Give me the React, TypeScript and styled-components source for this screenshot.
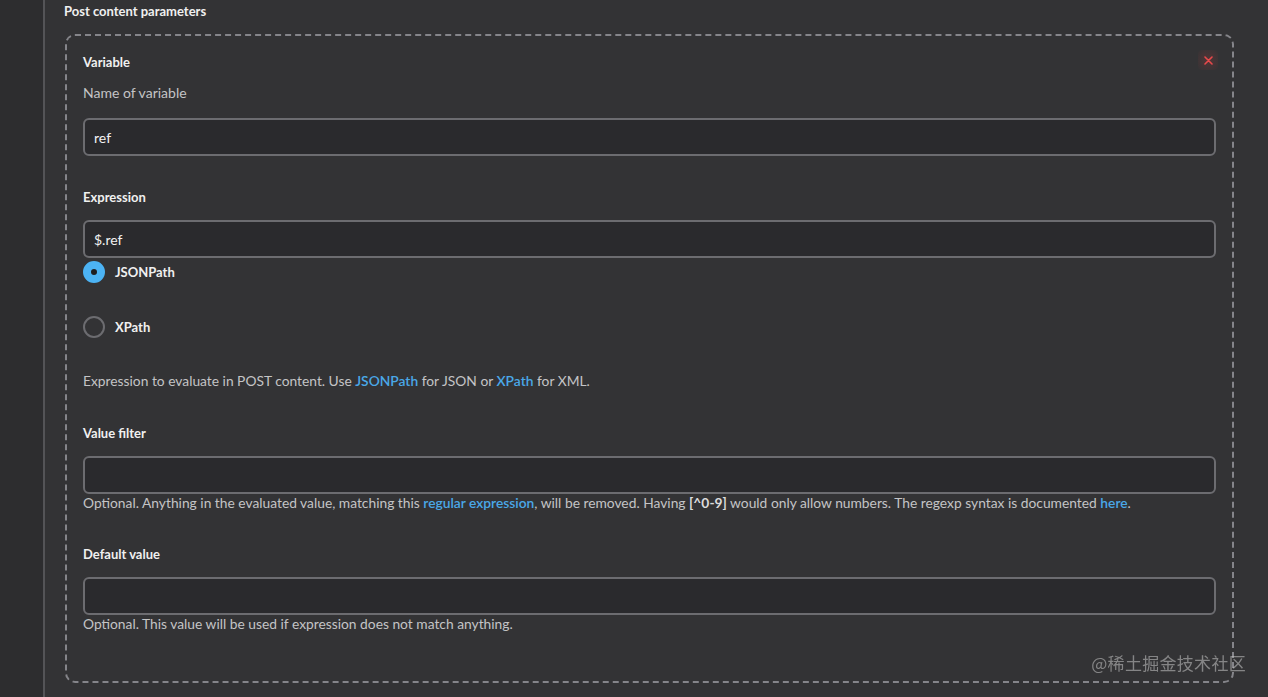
import React from 'react';
import styled, { createGlobalStyle } from 'styled-components';

const GlobalStyle = createGlobalStyle`
  html, body {
    margin: 0;
    padding: 0;
    background: #333335;
    font-family: Lato, "Noto Sans", "Liberation Sans", "Noto Sans CJK SC", sans-serif;
    color: #e8e8e8;
  }
`;

const Page = styled.div`
  display: flex;
  min-height: 697px;
  background: #333335;
`;

const Rail = styled.div`
  width: 43px;
  flex: none;
  background: #2d2d2f;
  border-right: 2px solid #545457;
`;

const Main = styled.main`
  flex: 1;
  padding: 2px 34px 15px 19px;
`;

const Title = styled.h2`
  margin: 0;
  font-size: 13px;
  font-weight: 700;
  line-height: 18px;
  color: #f0f0f0;
`;

const Card = styled.div`
  position: relative;
  margin: 14px 0 0 1px;
  border: 2px dashed #85858a;
  border-radius: 10px;
  padding: 16px 16px 48px 16px;
`;

const CloseButton = styled.button`
  position: absolute;
  top: 14px;
  right: 14px;
  width: 20px;
  height: 20px;
  padding: 0;
  border: none;
  border-radius: 4px;
  background: radial-gradient(circle, rgba(220, 60, 60, 0.18) 0%, rgba(220, 60, 60, 0.06) 70%, transparent 100%);
  display: flex;
  align-items: center;
  justify-content: center;
  cursor: pointer;
`;

const Label = styled.div<{ $top?: number }>`
  margin-top: ${(p) => p.$top ?? 0}px;
  font-size: 13px;
  font-weight: 700;
  line-height: 20px;
  color: #f0f0f0;
`;

const Description = styled.div<{ $top?: number }>`
  margin-top: ${(p) => p.$top ?? 0}px;
  font-size: 14px;
  line-height: 20px;
  color: #c4c4c6;
`;

const Help = styled.div<{ $top?: number }>`
  margin-top: ${(p) => p.$top ?? 0}px;
  font-size: 13.8px;
  line-height: 18px;
  color: #c4c4c6;

  b {
    color: #dcdcdc;
  }
`;

const Link = styled.a`
  color: #4aa8e8;
  font-weight: 600;
  text-decoration: none;
`;

const Input = styled.input<{ $top?: number }>`
  display: block;
  box-sizing: border-box;
  width: 100%;
  height: 38px;
  margin-top: ${(p) => p.$top ?? 0}px;
  padding: 0 9px;
  background: #2a2a2d;
  border: 2px solid #6c6c70;
  border-radius: 6px;
  color: #f2f2f2;
  font-family: inherit;
  font-size: 14px;
  outline: none;
`;

const RadioRow = styled.label<{ $top?: number }>`
  display: flex;
  align-items: center;
  gap: 10px;
  height: 22px;
  margin-top: ${(p) => p.$top ?? 0}px;
  font-size: 13px;
  font-weight: 700;
  color: #f0f0f0;
  cursor: pointer;
`;

const RadioDot = styled.span<{ $checked?: boolean }>`
  box-sizing: border-box;
  width: 22px;
  height: 22px;
  border-radius: 50%;
  flex: none;
  border: ${(p) => (p.$checked ? '8px solid #4cb3f4' : '2px solid #6c6c70')};
  background: ${(p) => (p.$checked ? '#1e1e20' : 'transparent')};
`;

const Watermark = styled.div`
  position: fixed;
  right: 22px;
  bottom: 22px;
  font-size: 17px;
  color: rgba(200, 200, 200, 0.55);
  font-family: "Noto Sans CJK SC", sans-serif;
  letter-spacing: 0.3px;
  pointer-events: none;
`;

export default function App() {
  return (
    <>
      <GlobalStyle />
      <Page>
        <Rail />
        <Main>
          <Title>Post content parameters</Title>
          <Card>
            <CloseButton aria-label="Remove">
              <svg width="9" height="9" viewBox="0 0 9 9">
                <path d="M1 1 L8 8 M8 1 L1 8" stroke="#e8494b" strokeWidth="1.6" strokeLinecap="round" />
              </svg>
            </CloseButton>

            <Label>Variable</Label>
            <Description $top={11}>Name of variable</Description>
            <Input $top={15} defaultValue="ref" />

            <Label $top={31}>Expression</Label>
            <Input $top={13} defaultValue="$.ref" />
            <RadioRow $top={3}>
              <RadioDot $checked />
              JSONPath
            </RadioRow>
            <RadioRow $top={33}>
              <RadioDot />
              XPath
            </RadioRow>
            <Help $top={34}>
              Expression to evaluate in POST content. Use <Link href="#">JSONPath</Link> for JSON or{' '}
              <Link href="#">XPath</Link> for XML.
            </Help>

            <Label $top={33}>Value filter</Label>
            <Input $top={13} />
            <Help>
              Optional. Anything in the evaluated value, matching this <Link href="#">regular expression</Link>, will
              be removed. Having <b>[^0-9]</b> would only allow numbers. The regexp syntax is documented{' '}
              <Link href="#">here</Link>.
            </Help>

            <Label $top={32}>Default value</Label>
            <Input $top={13} />
            <Help>Optional. This value will be used if expression does not match anything.</Help>
          </Card>
        </Main>
      </Page>
      <Watermark>@稀土掘金技术社区</Watermark>
    </>
  );
}
